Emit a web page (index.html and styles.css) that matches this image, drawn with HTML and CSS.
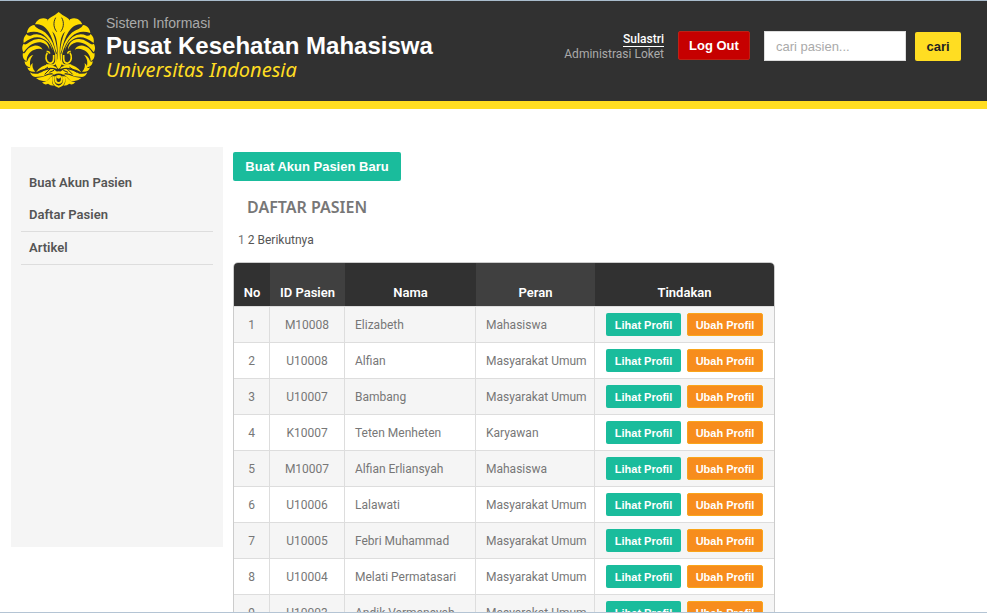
FILE: index.html
```html
<!DOCTYPE html>
<html lang="id">
<head>
<meta charset="utf-8">
<title>Pusat Kesehatan Mahasiswa</title>
<link rel="stylesheet" href="styles.css">
</head>
<body>
<header class="header">
  <svg class="logo" viewBox="6 6 222 234" role="img" aria-label="Universitas Indonesia">
    <defs>
      <g id="half">
        <path class="gold" d="M82 31C64 22 50 34 45 46C72 44 92 62 107 124L112 136C112 104 98 62 84 44Z"/>
        <path class="gold" d="M43 48C29 50 22 60 21 72C54 60 88 74 106 136L109 148C106 102 84 68 56 60Q46 56 43 48Z"/>
        <path class="gold" d="M20 75C12 82 9 92 11 102C38 80 62 80 80 96Q92 106 98 126Q94 100 74 84Q54 70 32 80Q22 82 20 75Z"/>
        <path class="gold" d="M11 104C5 112 6 124 11 130C26 108 44 98 62 100Q82 104 88 122Q88 104 72 94Q50 84 28 100Q16 110 11 104Z"/>
        <path class="gold" d="M9 131C6 144 12 154 20 156C20 138 32 124 50 120Q62 118 68 122Q60 108 42 110Q24 114 16 130Q12 136 9 131Z"/>
        <path class="gold" d="M14 156C14 168 22 174 32 175C28 160 30 148 40 138Q28 140 22 156Q18 160 14 156Z"/>
        <path class="gold" d="M22 175C24 186 34 190 46 188C38 180 36 172 38 162Q30 168 30 176Q26 179 22 175Z"/>
        <path class="strand" d="M82 132C76 140 76 158 88 162Q101 164 101 148V138M80 128Q88 126 89 134"/>
        <path class="strand" d="M108 134V154Q108 166 98 168H78"/>
        <path class="gold" d="M48 190Q66 164 92 168L108 174L112 180Q94 174 80 178Q60 182 48 190Z"/>
        <path class="gold" d="M30 190Q38 196 54 194Q80 180 98 180Q106 182 112 190L102 192Q82 192 70 202L46 204Q34 202 30 190Z"/>
        <path class="vein" d="M62 190L84 174M74 196L92 178M88 190L102 184"/>
        <path class="gold" d="M48 207Q70 204 86 197L102 196Q90 204 80 216Q62 220 48 207Z"/>
        <path class="gold" d="M66 220Q80 220 92 204L98 202Q92 222 102 230Q90 230 84 224Q74 230 66 220Z"/>
      </g>
    </defs>
    <use href="#half"/>
    <use href="#half" transform="translate(232 0) scale(-1 1)"/>
    <path class="gold" d="M116 9Q106 18 94 24C74 34 76 56 94 66C108 74 112 96 113 128L112 150L106 164L112 176L116 180L120 176L126 164L120 150L119 128C120 96 124 74 138 66C156 56 158 34 138 24Q126 18 116 9Z"/>
    <path class="vein" d="M107 26C98 42 102 58 110 68M125 26C134 42 130 58 122 68"/>
    <path class="ring" d="M101 202C96 220 104 231 116 233C128 231 136 220 131 202"/>
    <path class="ring" d="M107 202C104 216 109 222 116 222C123 222 128 216 125 202"/>
    <path class="gold" d="M96 192Q116 182 136 192L130 197Q116 190 102 197ZM108 200Q116 196 124 200Q123 208 116 209Q109 208 108 200Z"/>
  </svg>
  <div class="brand">
    <p class="brand-top">Sistem Informasi</p>
    <h1 class="brand-name">Pusat Kesehatan Mahasiswa</h1>
    <p class="brand-sub">Universitas Indonesia</p>
  </div>
  <div class="user">
    <a class="user-name" href="#">Sulastri</a>
    <span class="user-role">Administrasi Loket</span>
  </div>
  <button class="logout" type="button">Log Out</button>
  <form class="search">
    <input class="search-box" type="text" placeholder="cari pasien..." aria-label="Cari pasien">
    <button class="search-go" type="button">cari</button>
  </form>
</header>
<div class="page">
  <nav class="side">
    <a href="#">Buat Akun Pasien</a>
    <a class="ruled" href="#">Daftar Pasien</a>
    <a class="ruled" href="#">Artikel</a>
  </nav>
  <main class="main">
    <button class="create" type="button">Buat Akun Pasien Baru</button>
    <h2 class="title">DAFTAR PASIEN</h2>
    <div class="pager"><span>1</span> <a href="#">2</a> <a href="#">Berikutnya</a></div>
    <div class="frame">
      <table class="list">
        <colgroup><col class="c-no"><col class="c-id"><col class="c-name"><col class="c-role"><col class="c-act"></colgroup>
        <thead><tr><th>No</th><th>ID Pasien</th><th>Nama</th><th>Peran</th><th>Tindakan</th></tr></thead>
        <tbody>
          <tr><td>1</td><td>M10008</td><td>Elizabeth</td><td>Mahasiswa</td><td><button class="view" type="button">Lihat Profil</button><button class="edit" type="button">Ubah Profil</button></td></tr>
          <tr><td>2</td><td>U10008</td><td>Alfian</td><td>Masyarakat Umum</td><td><button class="view" type="button">Lihat Profil</button><button class="edit" type="button">Ubah Profil</button></td></tr>
          <tr><td>3</td><td>U10007</td><td>Bambang</td><td>Masyarakat Umum</td><td><button class="view" type="button">Lihat Profil</button><button class="edit" type="button">Ubah Profil</button></td></tr>
          <tr><td>4</td><td>K10007</td><td>Teten Menheten</td><td>Karyawan</td><td><button class="view" type="button">Lihat Profil</button><button class="edit" type="button">Ubah Profil</button></td></tr>
          <tr><td>5</td><td>M10007</td><td>Alfian Erliansyah</td><td>Mahasiswa</td><td><button class="view" type="button">Lihat Profil</button><button class="edit" type="button">Ubah Profil</button></td></tr>
          <tr><td>6</td><td>U10006</td><td>Lalawati</td><td>Masyarakat Umum</td><td><button class="view" type="button">Lihat Profil</button><button class="edit" type="button">Ubah Profil</button></td></tr>
          <tr><td>7</td><td>U10005</td><td>Febri Muhammad</td><td>Masyarakat Umum</td><td><button class="view" type="button">Lihat Profil</button><button class="edit" type="button">Ubah Profil</button></td></tr>
          <tr><td>8</td><td>U10004</td><td>Melati Permatasari</td><td>Masyarakat Umum</td><td><button class="view" type="button">Lihat Profil</button><button class="edit" type="button">Ubah Profil</button></td></tr>
          <tr><td>9</td><td>U10003</td><td>Andik Vermansyah</td><td>Masyarakat Umum</td><td><button class="view" type="button">Lihat Profil</button><button class="edit" type="button">Ubah Profil</button></td></tr>
        </tbody>
      </table>
    </div>
  </main>
</div>
</body>
</html>
```
FILE: styles.css
```css
* { box-sizing: border-box; }
body {
  margin: 0;
  height: 100vh;
  overflow: hidden;
  display: flex;
  flex-direction: column;
  border-top: 1px solid #a9bccd;
  border-bottom: 1px solid #b4c4d4;
  background: #fff;
  color: #777;
  font: 12px/16px "Trebuchet MS", Roboto, sans-serif;
}
h1, h2, p { margin: 0; }
a { color: inherit; text-decoration: none; }
button {
  border: 1px solid transparent;
  border-radius: 2px;
  padding: 0;
  color: #fff;
  font: bold 13px/16px "Liberation Sans", Arial, sans-serif;
}

.header {
  flex: none;
  display: flex;
  align-items: flex-start;
  padding: 10px 26px 12px 22px;
  border-bottom: 8px solid #ffdd22;
  background: #313131;
}
.logo { width: 74px; height: 78px; flex: none; }
.gold { fill: #ffdd00; }
.strand, .ring { fill: none; stroke: #ffdd00; stroke-width: 5; }
.ring { stroke-width: 6; }
.vein { fill: none; stroke: #313131; stroke-width: 3; }

.brand { margin: 4px auto 0 10px; white-space: nowrap; }
.brand-top { color: #aaa; font: 14px/17px "Liberation Sans", Arial, sans-serif; }
.brand-name { color: #fff; font: bold 24px/28px "Liberation Sans", Arial, sans-serif; }
.brand-sub { color: #ffdd22; font: italic 20px/20px "Trebuchet MS", "Noto Sans", sans-serif; }

.user {
  display: flex;
  flex-direction: column;
  align-items: flex-end;
  margin: 21px 14px 0 0;
  line-height: 15px;
  white-space: nowrap;
}
.user-name { color: #fff; border-bottom: 1px solid #fff; line-height: 14px; font-weight: 500; }
.user-role { color: #aaa; }
.logout { width: 72px; height: 29px; margin: 20px 14px 0 0; background: #c60000; border-color: #bd2216; }
.search { display: flex; align-items: flex-start; gap: 9px; margin-top: 20px; }
.search-box {
  width: 142px;
  height: 30px;
  padding: 0 11px;
  border: 1px solid #ddd;
  background: #fff;
  font: 13px/16px "Liberation Sans", Arial, sans-serif;
}
.search-box::placeholder { color: #aaa; }
.search-go { width: 46px; height: 29px; margin-top: 1px; background: #ffdd22; color: #222; }

.page {
  flex: 1;
  min-height: 0;
  display: flex;
  align-items: flex-start;
  gap: 10px;
  padding: 38px 11px 0;
}
.side {
  flex: none;
  display: flex;
  flex-direction: column;
  width: 212px;
  min-height: 400px;
  padding: 20px 10px;
  background: #f5f5f5;
  color: #555;
  font-size: 13px;
  font-weight: 600;
}
.side a { padding: 8px; }
.side .ruled { border-bottom: 1px solid #ddd; }

.main { flex: 1; min-width: 0; padding-top: 5px; }
.create { display: block; width: 168px; height: 29px; background: #1abc9c; }
.title { margin: 16px 14px 0; font: 600 16px/20px "Trebuchet MS", "Noto Sans", sans-serif; }
.pager { margin: 15px 5px 14px; color: #555; }
.pager span { color: #777; }

.frame {
  width: 542px;
  border: 1px solid #ccc;
  border-radius: 5px;
  overflow: hidden;
}
.list { width: 100%; table-layout: fixed; border-collapse: separate; border-spacing: 0; white-space: nowrap; }
.c-no { width: 36px; }
.c-id { width: 75px; }
.c-name { width: 131px; }
.c-role { width: 119px; }
th {
  height: 43px;
  padding: 0 0 4px;
  vertical-align: bottom;
  background: #313131;
  color: #fff;
  font-size: 13px;
  line-height: 18px;
  font-weight: 600;
}
th:nth-child(even) { background: #404040; }
td {
  height: 36px;
  padding: 0 10px;
  border-top: 1px solid #ddd;
  border-right: 1px solid #ddd;
}
td:last-child { border-right: 0; padding-left: 11px; }
td:nth-child(-n+2) { padding: 0; text-align: center; }
tbody tr:nth-child(odd) { background: #f5f5f5; }
td button { height: 23px; font-size: 11px; line-height: 14px; vertical-align: middle; }
.view { width: 75px; margin-right: 6px; background: #1abc9c; }
.edit { width: 76px; background: #f78d1d; border-color: #faa51a; }
```
